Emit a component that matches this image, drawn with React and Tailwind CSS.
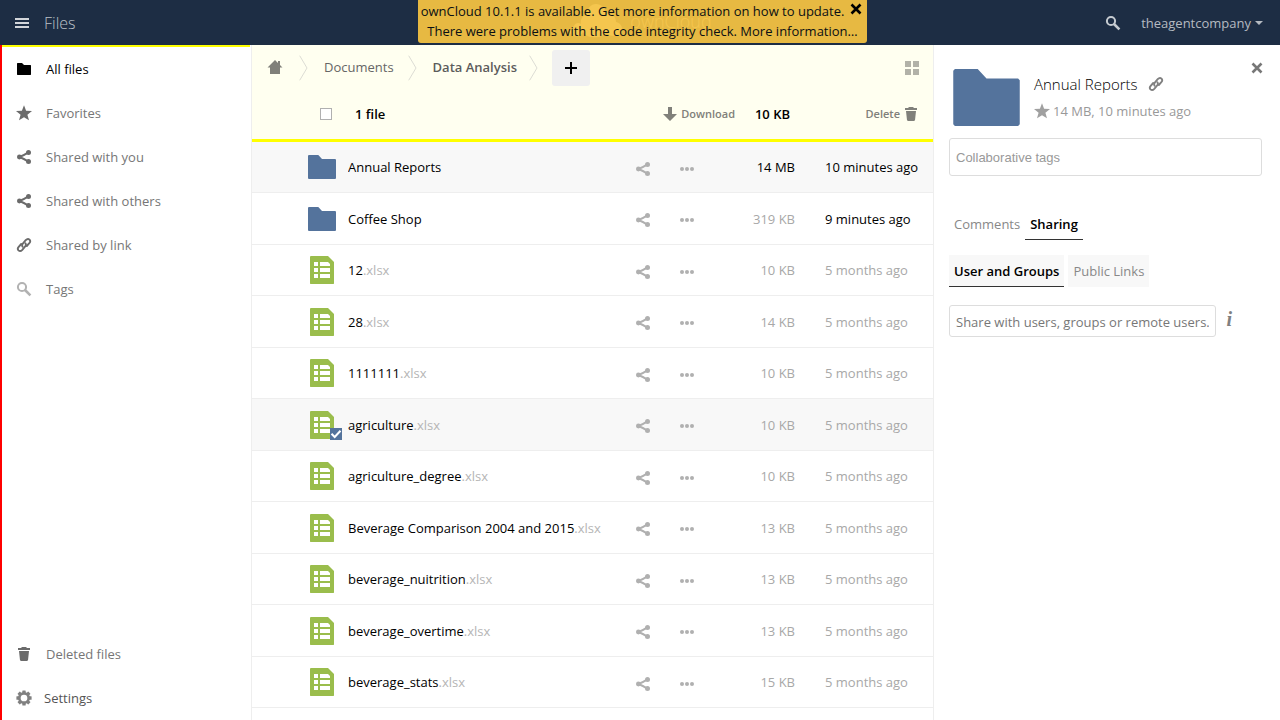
import React from "react";

const files = [
  { name: "Annual Reports", size: "14 MB", date: "10 minutes ago", folder: true, big: true, recent: true, active: true },
  { name: "Coffee Shop", size: "319 KB", date: "9 minutes ago", folder: true, recent: true },
  { name: "12", ext: ".xlsx", size: "10 KB", date: "5 months ago" },
  { name: "28", ext: ".xlsx", size: "14 KB", date: "5 months ago" },
  { name: "1111111", ext: ".xlsx", size: "10 KB", date: "5 months ago" },
  { name: "agriculture", ext: ".xlsx", size: "10 KB", date: "5 months ago", selected: true, active: true },
  { name: "agriculture_degree", ext: ".xlsx", size: "10 KB", date: "5 months ago" },
  { name: "Beverage Comparison 2004 and 2015", ext: ".xlsx", size: "13 KB", date: "5 months ago" },
  { name: "beverage_nuitrition", ext: ".xlsx", size: "13 KB", date: "5 months ago" },
  { name: "beverage_overtime", ext: ".xlsx", size: "13 KB", date: "5 months ago" },
  { name: "beverage_stats", ext: ".xlsx", size: "15 KB", date: "5 months ago" },
];

function Icon({ children, className = "size-4" }) {
  return (
    <svg viewBox="0 0 16 16" className={`${className} shrink-0`} fill="currentColor" aria-hidden="true">
      {children}
    </svg>
  );
}

const ShareIcon = (p) => (
  <Icon {...p}>
    <circle cx="3.4" cy="8" r="2.4" />
    <circle cx="12.5" cy="3.4" r="2.5" />
    <circle cx="12.5" cy="12.6" r="2.5" />
    <path d="M12 3.6Q8 6.2 3.5 8Q8 9.8 12 12.4" fill="none" stroke="currentColor" strokeWidth="1.9" />
  </Icon>
);
const LinkIcon = (p) => (
  <Icon {...p}>
    <g fill="none" stroke="currentColor" strokeWidth="1.9" strokeLinecap="round">
      <path d="M6.600 9.800C5.800 8.600 6 7.400 7 6.300L9.700 3.200C10.900 1.900 12.500 1.700 13.500 2.600C14.500 3.600 14.300 5 13.300 6.200L10.800 9" />
      <path d="M9.400 6.200C10.200 7.400 10 8.600 9 9.700L6.300 12.800C5.100 14.100 3.500 14.300 2.500 13.400C1.500 12.400 1.700 11 2.700 9.800L5.200 7" />
    </g>
  </Icon>
);
const StarIcon = (p) => (
  <Icon {...p}>
    <path d="M8 .3 10.100 5.700 16 6.100 11.400 9.800 13 15.300 8 12.200 3 15.300 4.600 9.800 0 6.100 5.900 5.700Z" />
  </Icon>
);
const SearchIcon = (p) => (
  <Icon {...p}>
    <circle cx="6" cy="6" r="4.100" fill="none" stroke="currentColor" strokeWidth="2" />
    <path d="m9 9 5.400 5.400" stroke="currentColor" strokeWidth="2.600" />
  </Icon>
);
const TrashIcon = (p) => (
  <Icon {...p}>
    <path d="M6 1h4l1 1h3v2H2V2h3zM3 5h10l-1 9.200-1 .8H5l-1-.8z" />
  </Icon>
);
const SmallFolder = (p) => (
  <Icon {...p}>
    <path d="M1.500 2H6l2 2h6.500l.5.500v9l-.5.500h-13l-.5-.500v-11z" />
  </Icon>
);
const GearIcon = (p) => (
  <Icon {...p}>
    <circle cx="8" cy="8" r="4.700" fill="none" stroke="currentColor" strokeWidth="2.700" />
    {[0, 45, 90, 135, 180, 225, 270, 315].map((a) => (
      <rect key={a} x="6.300" y="0.400" width="3.400" height="3" rx="0.500" transform={`rotate(${a} 8 8)`} />
    ))}
  </Icon>
);
const HomeIcon = (p) => (
  <Icon {...p}>
    <path d="M8 1 .5 8.500H3V15h10V8.500h2.500L13 6V2h-2v2z" />
  </Icon>
);
const DotsIcon = (p) => (
  <Icon {...p}>
    <circle cx="3" cy="8" r="2" />
    <circle cx="8" cy="8" r="2" />
    <circle cx="13" cy="8" r="2" />
  </Icon>
);
const CloseIcon = (p) => (
  <Icon {...p}>
    <path d="m3.500 3.500 9 9m0-9-9 9" stroke="currentColor" strokeWidth="2.600" />
  </Icon>
);

function FolderThumb({ className }) {
  return (
    <svg viewBox="0 0 28 24" className={className} fill="#54739c" aria-hidden="true">
      <path d="M.7 0h9.600L14 4h13.300l.7.700v18.600l-.7.700H.7L0 23.300V.7z" />
    </svg>
  );
}

function SheetThumb() {
  return (
    <svg viewBox="0 0 24 28" className="h-7 w-6" aria-hidden="true">
      <path d="M.5 0H18l6 6v21.500l-.5.500H.5l-.5-.5V.5z" fill="#9abd4c" />
      <path d="M4 6h4v4H4zM10 6h8l2 2v2H10zM4 12h4v4H4zM10 12h10v4H10zM4 18h4v4H4zM10 18h10v4H10z" fill="#fff" />
    </svg>
  );
}

function NavItem({ icon, label, className = "text-[#767676]" }) {
  return (
    <li>
      <a href="#" className={`flex h-11 items-center gap-3.5 pl-3.5 ${className}`}>
        {icon}
        {label}
      </a>
    </li>
  );
}

function Crumb() {
  return (
    <svg viewBox="0 0 9 26" className="h-[26px] w-[9px] shrink-0" fill="none" stroke="#dcdcd4" aria-hidden="true">
      <path d="M.7.700 8 13 .7 25.300" />
    </svg>
  );
}

function FileRow({ file }) {
  const cell = "border-b border-[#eee] p-0";
  return (
    <tr className={`odd:h-[51px] even:h-[52px] ${file.active ? "bg-[#f8f8f8]" : "bg-white"}`}>
      <td className={cell}>
        <div className="ml-14 flex w-7 justify-center">
          {file.folder ? (
            <FolderThumb className="h-6 w-7" />
          ) : (
            <div className="relative">
              <SheetThumb />
              {file.selected && (
                <span className="absolute -right-2 -bottom-px size-3">
                  <input
                    type="checkbox"
                    defaultChecked
                    aria-label={`Select ${file.name}`}
                    className="block size-3 appearance-none bg-[#54739c]"
                  />
                  <svg viewBox="0 0 12 12" className="pointer-events-none absolute inset-0 size-3" fill="none" stroke="#fff" strokeWidth="2" aria-hidden="true">
                    <path d="m1.500 5.800 3.200 3.200 5.800-6.200" />
                  </svg>
                </span>
              )}
            </div>
          )}
        </div>
      </td>
      <td className={`${cell} truncate`}>
        <a href="#" className="text-black">
          {file.name}
          <span className="text-[#b5b5b5]">{file.ext}</span>
        </a>
      </td>
      <td className={cell}>
        <div className="flex pt-[3px] text-[#b0b0b0]">
          <button type="button" aria-label="Share" className="flex w-11 justify-center"><ShareIcon /></button>
          <button type="button" aria-label="Actions" className="flex w-11 justify-center"><DotsIcon /></button>
        </div>
      </td>
      <td className={`${cell} pr-[30px] text-right ${file.big ? "text-black" : "text-[#a8a8a8]"}`}>{file.size}</td>
      <td className={`${cell} whitespace-nowrap ${file.recent ? "text-black" : "text-[#a8a8a8]"}`}>{file.date}</td>
    </tr>
  );
}

export default function App() {
  const th = "border-b-[3px] border-[#ff0] bg-[#fffff0] px-0 pt-0 pb-0.5 font-semibold";
  return (
    <div className="flex h-screen flex-col overflow-hidden bg-white font-['Open_Sans',sans-serif] text-[13px] leading-5 text-black">
      <header className="relative flex h-[45px] shrink-0 items-center justify-between bg-[#1d2d44] text-[#bbc0c7]">
        <button type="button" className="flex items-center gap-3.5 pl-3.5 text-base font-light">
          <Icon><path d="M1 3h14v2H1zM1 7h14v2H1zM1 11h14v2H1z" fill="#d2d5da" /></Icon>
          Files
        </button>
        <div className="absolute inset-x-0 top-1 flex items-center justify-center gap-2 text-white/60">
          <svg viewBox="0 0 54 34" className="h-[34px] w-[54px]" fill="currentColor" aria-hidden="true">
            <path d="M6 22c1-3 5-4 7-2-1-5 2-9 6-9 0-7 4-11 9-11s9 4 10 10c6-1 10 3 10 8 4 1 6 4 6 7 0 5-4 7-8 7-3 0-6-1-7-4-3 4-9 6-14 5-5 0-8-2-10-5-2 4-6 5-9 4-5-1-6-7-0-10z" />
          </svg>
          <span className="text-lg font-light">ownCloud</span>
        </div>
        <div className="absolute inset-x-0 top-0 flex justify-center pl-[5px]">
          <div className="h-[43px] rounded-b-[3px] bg-[#fec942]/90 px-[3px] pt-px text-center text-[#0a0f14]">
            <div className="flex">
              <a href="#">ownCloud 10.1.1 is available. Get more information on how to update.</a>
              <button type="button" aria-label="Dismiss" className="ml-1 self-start text-black"><CloseIcon /></button>
            </div>
            <div><a href="#">There were problems with the code integrity check. More information…</a></div>
          </div>
        </div>
        <div className="flex items-center gap-5 pr-[17px]">
          <button type="button" aria-label="Search" className="text-[#c6cbd1]"><SearchIcon /></button>
          <button type="button" className="flex items-center gap-1 text-[#b5bac1]">
            theagentcompany
            <svg viewBox="0 0 8 4" className="h-1 w-2" fill="currentColor" aria-hidden="true"><path d="M0 0h8L4 4z" /></svg>
          </button>
        </div>
      </header>

      <div className="flex min-h-0 flex-1">
        <nav className="flex w-[251px] shrink-0 flex-col justify-between border-l-2 border-[#f00] pr-px">
          <ul className="border-t-2 border-[#ff0]">
            <NavItem icon={<SmallFolder />} label="All files" className="text-black" />
            <NavItem icon={<StarIcon className="size-4 text-[#6b6b6b]" />} label="Favorites" />
            <NavItem icon={<ShareIcon className="size-4 text-[#6b6b6b]" />} label="Shared with you" />
            <NavItem icon={<ShareIcon className="size-4 text-[#6b6b6b]" />} label="Shared with others" />
            <NavItem icon={<LinkIcon className="size-4 text-[#6b6b6b]" />} label="Shared by link" />
            <NavItem icon={<SearchIcon className="size-4 text-[#b2b2b2]" />} label="Tags" />
          </ul>
          <div>
            <ul>
              <NavItem icon={<TrashIcon className="size-4 text-[#6b6b6b]" />} label="Deleted files" />
            </ul>
            <button type="button" className="flex h-11 w-full items-center gap-3 pl-3.5 text-[#555]">
              <GearIcon className="size-4 text-[#808080]" />
              Settings
            </button>
          </div>
        </nav>

        <main className="min-w-0 flex-1 overflow-hidden border-l border-[#eee]">
          <div className="flex h-[45px] items-center bg-[#fffff0] pr-[13px] pl-[15px] text-[#666]">
            <a href="#" aria-label="Home" className="mr-4 pb-0.5 text-[#80807a]"><HomeIcon /></a>
            <Crumb />
            <a href="#" className="mr-3.5 ml-4 pb-0.5">Documents</a>
            <Crumb />
            <a href="#" className="mr-3 ml-4 pb-0.5 font-semibold text-[#5c5c5c]">Data Analysis</a>
            <Crumb />
            <button type="button" aria-label="New" className="ml-3.5 flex h-9 w-[38px] items-center justify-center rounded-[3px] bg-[#f0f0f0] text-black">
              <Icon><path d="M7 2h2v5h5v2H9v5H7V9H2V7h5z" /></Icon>
            </button>
            <button type="button" aria-label="Grid view" className="ml-auto text-[#b2b2a8]">
              <Icon><path d="M1 1h6v6H1zM9 1h6v6H9zM1 9h6v6H1zM9 9h6v6H9z" /></Icon>
            </button>
          </div>
          <table className="w-full table-fixed border-separate border-spacing-0">
            <colgroup>
              <col className="w-24" />
              <col />
              <col className="w-[114px]" />
              <col className="w-[90px]" />
              <col className="w-[108px]" />
            </colgroup>
            <thead>
              <tr className="h-[52px]">
                <th className={th}>
                  <input type="checkbox" aria-label="Select all" className="ml-[68px] block size-3 appearance-none border border-[#b0b0b0] bg-white" />
                </th>
                <th className={`${th} text-left`}><span className="pl-[7px]">1 file</span></th>
                <th className={th}>
                  <button type="button" className="ml-auto flex items-center gap-[3px] text-[11px] text-[#80807a]">
                    <Icon><path d="M6 1h4v7h5l-7 7-7-7h5z" /></Icon>
                    Download
                  </button>
                </th>
                <th className={`${th} text-right`}><span className="pr-[35px]">10 KB</span></th>
                <th className={th}>
                  <button type="button" className="mr-3.5 ml-auto flex items-center gap-[3px] text-[11px] text-[#80807a]">
                    Delete
                    <TrashIcon />
                  </button>
                </th>
              </tr>
            </thead>
            <tbody>
              {files.map((f) => <FileRow key={f.name} file={f} />)}
            </tbody>
          </table>
        </main>

        <aside className="w-[347px] shrink-0 border-l border-[#eee] pr-[18px] pl-[15px]">
          <div className="flex pt-6 pl-1">
            <FolderThumb className="h-[57px] w-[67px]" />
            <div className="ml-3.5 flex-1 pt-1">
              <div className="flex items-center gap-2.5">
                <h1 className="text-[15px] leading-[22px] font-light">Annual Reports</h1>
                <button type="button" aria-label="Copy link" className="text-[#808080]"><LinkIcon /></button>
              </div>
              <div className="flex items-center gap-[3px] pt-1.5 text-[#999]">
                <button type="button" aria-label="Favorite" className="text-[#a0a0a0]"><StarIcon /></button>
                14 MB, 10 minutes ago
              </div>
            </div>
            <button type="button" aria-label="Close" className="-mt-[9px] -mr-[3px] self-start text-[#777]"><CloseIcon /></button>
          </div>
          <input
            type="text"
            aria-label="Collaborative tags"
            placeholder="Collaborative tags"
            className="mt-3 block h-[38px] w-full rounded-[3px] border border-[#ddd] px-1.5 font-['Liberation_Sans',sans-serif] placeholder:text-[#999]"
          />
          <div role="tablist" aria-label="Details" className="mt-8 flex">
            <button type="button" role="tab" aria-selected="false" className="h-8 px-[5px] text-[#888]">Comments</button>
            <button type="button" role="tab" aria-selected="true" className="h-8 border-b border-[#333] px-[5px] font-semibold">Sharing</button>
          </div>
          <div role="tablist" aria-label="Share type" className="mt-[15px] flex gap-1">
            <button type="button" role="tab" aria-selected="true" className="h-8 border-b border-[#333] bg-[#f8f8f8] px-[5px] font-semibold">User and Groups</button>
            <button type="button" role="tab" aria-selected="false" className="h-8 bg-[#f8f8f8] px-[5px] text-[#888]">Public Links</button>
          </div>
          <div className="mt-[18px] flex items-start gap-2.5 pr-[30px]">
            <input
              type="text"
              aria-label="Share with"
              placeholder="Share with users, groups or remote users…"
              className="h-8 min-w-0 flex-1 rounded-[3px] border border-[#ddd] px-1.5 pt-0.5 placeholder:text-[#777]"
            />
            <button type="button" aria-label="Sharing information" className="font-['Liberation_Serif',serif] text-xl leading-7 font-bold text-[#808080] italic">i</button>
          </div>
        </aside>
      </div>
    </div>
  );
}
